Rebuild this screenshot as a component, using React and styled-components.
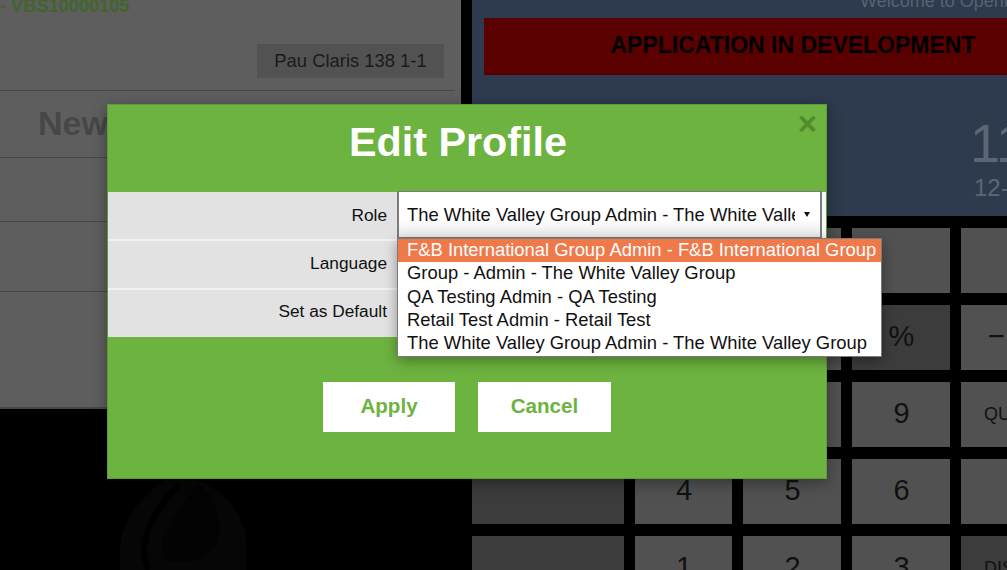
import React from "react"
import styled, { createGlobalStyle } from "styled-components"

const GlobalStyle = createGlobalStyle`
    html, body {
        margin: 0;
        height: 100%;
        overflow: hidden;
        background: #000;
        font-family: "Liberation Sans", Arial, sans-serif;
    }
`;

const Page = styled.div`
    position: relative;
    display: flex;
    gap: 11px;
    width: 1007px;
    height: 570px;
    overflow: hidden;
    background: #000;
`;

const LeftColumn = styled.div`
    flex: 0 0 461px;
    display: flex;
    flex-direction: column;
`;

const OrderPanel = styled.div`
    flex: 0 0 409px;
    background: #5e5e5e;
    border-bottom: 2px solid #484848;
    box-sizing: border-box;
    overflow: hidden;
`;

const OrderRef = styled.div`
    margin-top: -4px;
    height: 48px;
    font-size: 18.2px;
    font-weight: bold;
    color: #41652b;
`;

const TableRow = styled.div`
    display: flex;
    justify-content: flex-end;
    height: 46px;
    padding-right: 17px;
`;

const TableName = styled.div`
    width: 187px;
    height: 34px;
    line-height: 33px;
    text-align: center;
    font-size: 18.4px;
    color: #1a1a1a;
    background: #525252;
`;

const ListRow = styled.div`
    width: 455px;
    height: ${({ $height }) => $height}px;
    box-sizing: border-box;
    border-top: 1px solid #474747;
    padding-left: 38px;
    font-size: 34px;
    line-height: 64px;
    font-weight: bold;
    color: #474747;
`;

const LogoArea = styled.div`
    flex: 0 0 auto;
    padding: 71px 0 0 120px;
`;

const RightColumn = styled.div`
    flex: 0 0 642px;
    display: flex;
    flex-direction: column;
    gap: 12px;
`;

const InfoPanel = styled.div`
    flex: 0 0 216px;
    background: #2e3b4e;
    overflow: hidden;
`;

const Welcome = styled.div`
    margin-top: -9px;
    height: 27px;
    padding-left: 388px;
    font-size: 18px;
    white-space: nowrap;
    color: #566273;
`;

const DevBanner = styled.div`
    height: 57px;
    margin: 0 12px;
    line-height: 55px;
    text-align: center;
    font-size: 23px;
    font-weight: bold;
    color: #000;
    background: #5a0000;
`;

const Clock = styled.div`
    padding: 37px 0 0 498px;
    color: #5d6774;
    white-space: nowrap;
`;

const ClockTime = styled.div`
    font-size: 54px;
    line-height: 62px;
`;

const ClockDate = styled.div`
    padding-left: 4px;
    font-size: 24px;
    line-height: 28px;
`;

const Keypad = styled.div`
    flex: 0 0 auto;
    display: grid;
    grid-template-columns: 152px 97px 98px 98px 70px;
    grid-auto-rows: 65px;
    gap: 12px 11px;
`;

const Key = styled.div`
    display: flex;
    align-items: center;
    justify-content: ${({ $small }) => ($small ? "flex-start" : "center")};
    padding: ${({ $small }) => ($small ? "0 0 0 23px" : "0 0 2px 1px")};
    font-size: ${({ $small }) => ($small ? "18px" : "29px")};
    white-space: nowrap;
    color: #111;
    background: ${({ $dark }) => ($dark ? "#3c3c3c" : "#515151")};
    overflow: hidden;
`;

const Modal = styled.div`
    position: absolute;
    left: 107px;
    top: 104px;
    width: 720px;
    height: 375px;
    box-sizing: border-box;
    border: 1px solid #5f9c37;
    background: #6db33f;
    box-shadow: 0 4px 14px rgba(0, 0, 0, 0.35);
`;

const CloseMark = styled.div`
    position: absolute;
    right: 9px;
    top: 1px;
    font-size: 33px;
    line-height: 35px;
    font-weight: bold;
    color: #528c2d;
`;

const Title = styled.h1`
    margin: 0;
    height: 87px;
    padding: 12px 18px 0 0;
    box-sizing: border-box;
    line-height: 50px;
    text-align: center;
    font-size: 41.3px;
    font-weight: bold;
    color: #fff;
`;

const FormRows = styled.div`
    display: flex;
    flex-direction: column;
    gap: 2px;
    background: #f2f2f2;
`;

const FormRow = styled.div`
    display: flex;
    height: 47px;
    background: #e2e2e2;
`;

const Label = styled.div`
    width: 279px;
    line-height: ${({ $line }) => $line}px;
    text-align: right;
    font-size: 17.3px;
    color: #111;
`;

const Field = styled.div`
    flex: 1;
    margin-left: 10px;
    background: #f7f7f7;
    display: flex;
`;

const SelectBox = styled.div`
    display: flex;
    align-items: center;
    width: 425px;
    height: 47px;
    box-sizing: border-box;
    margin-top: -1px;
    padding: 0 10px 0 8px;
    border: 1px solid #7b7b7b;
    border-width: 1px 2px 1px 2px;
    background: linear-gradient(#fff 60%, #e9e9e9);
    font-size: 18.4px;
    color: #111;
`;

const SelectText = styled.div`
    width: 390px;
    overflow: hidden;
    white-space: nowrap;
`;

const Dropdown = styled.ul`
    position: absolute;
    left: 289px;
    top: 133px;
    width: 485px;
    box-sizing: border-box;
    margin: 0;
    padding: 0 0 1px;
    list-style: none;
    background: #fff;
    border: 1px solid #7b7b7b;
    box-shadow: 0 4px 12px rgba(0, 0, 0, 0.35);
`;

const Option = styled.li`
    height: 23.3px;
    line-height: 22px;
    padding-left: 9px;
    font-size: 18.4px;
    white-space: nowrap;
    color: ${({ $active }) => ($active ? "#fff" : "#111")};
    background: ${({ $active }) => ($active ? "#f0794a" : "transparent")};
`;

const Actions = styled.div`
    display: flex;
    gap: 23px;
    padding: 45px 0 0 215px;
`;

const ActionButton = styled.button`
    width: ${({ $width }) => $width}px;
    height: 50px;
    border: 0;
    padding: 0 0 3px;
    background: #fff;
    font-family: inherit;
    font-size: 20.6px;
    font-weight: bold;
    color: #6db33f;
`;

const roles = [
    "F&B International Group Admin - F&B International Group",
    "Group - Admin - The White Valley Group",
    "QA Testing Admin - QA Testing",
    "Retail Test Admin - Retail Test",
    "The White Valley Group Admin - The White Valley Group",
]

const keys = [
    { dark: true }, {}, {}, {}, {},
    { dark: true }, {}, {}, { label: "%", dark: true }, { label: "−" },
    { dark: true }, { label: "7" }, { label: "8" }, { label: "9" }, { label: "QUANTITY", small: true },
    { dark: true }, { label: "4" }, { label: "5" }, { label: "6" }, {},
    { dark: true }, { label: "1" }, { label: "2" }, { label: "3" }, { label: "DISCOUNT", small: true, dark: true },
]

const App = () => {
    return (
        <>
            <GlobalStyle />
            <Page>
                <LeftColumn>
                    <OrderPanel>
                        <OrderRef>- VBS10000105</OrderRef>
                        <TableRow>
                            <TableName>Pau Claris 138 1-1</TableName>
                        </TableRow>
                        <ListRow $height={67}>New</ListRow>
                        <ListRow $height={64} />
                        <ListRow $height={70} />
                        <ListRow $height={90} />
                    </OrderPanel>
                    <LogoArea>
                        <svg width="126" height="90" viewBox="0 0 126 90" style={{ display: "block" }}>
                            <path d="M45 0 C20 15 0 45 0 70 L0 90 L126 90 L126 60 C124 35 105 8 75 0 Z" fill="#060606" />
                            <path d="M60 4 C38 25 24 50 24 72 C24 79 26 85 28 90" fill="none" stroke="#000" strokeWidth="6" />
                            <path d="M80 4 C60 25 42 50 42 68 C42 74 44 80 50 82 C75 85 100 75 100 50 C100 30 90 15 80 4 Z" fill="#030303" />
                        </svg>
                    </LogoArea>
                </LeftColumn>
                <RightColumn>
                    <InfoPanel>
                        <Welcome>Welcome to OpenBravo</Welcome>
                        <DevBanner>APPLICATION IN DEVELOPMENT</DevBanner>
                        <Clock>
                            <ClockTime>11:24</ClockTime>
                            <ClockDate>12-10-2018</ClockDate>
                        </Clock>
                    </InfoPanel>
                    <Keypad>
                        {keys.map((k, i) => (
                            <Key key={i} $dark={k.dark} $small={k.small}>{k.label}</Key>
                        ))}
                    </Keypad>
                </RightColumn>
                <Modal>
                    <CloseMark>×</CloseMark>
                    <Title>Edit Profile</Title>
                    <FormRows>
                        <FormRow>
                            <Label $line={46}>Role</Label>
                            <Field>
                                <SelectBox>
                                    <SelectText>The White Valley Group Admin - The White Valley Group</SelectText>
                                    <svg width="6" height="5" viewBox="0 0 6 5" style={{ marginLeft: 9 }}>
                                        <path d="M0 0 H6 L3 5 Z" fill="#111" />
                                    </svg>
                                </SelectBox>
                            </Field>
                        </FormRow>
                        <FormRow>
                            <Label $line={45}>Language</Label>
                            <Field />
                        </FormRow>
                        <FormRow>
                            <Label $line={43}>Set as Default</Label>
                            <Field />
                        </FormRow>
                    </FormRows>
                    <Actions>
                        <ActionButton $width={132}>Apply</ActionButton>
                        <ActionButton $width={133}>Cancel</ActionButton>
                    </Actions>
                    <Dropdown>
                        {roles.map((r, i) => (
                            <Option key={r} $active={i === 0}>{r}</Option>
                        ))}
                    </Dropdown>
                </Modal>
            </Page>
        </>
    );
};

export default App;
